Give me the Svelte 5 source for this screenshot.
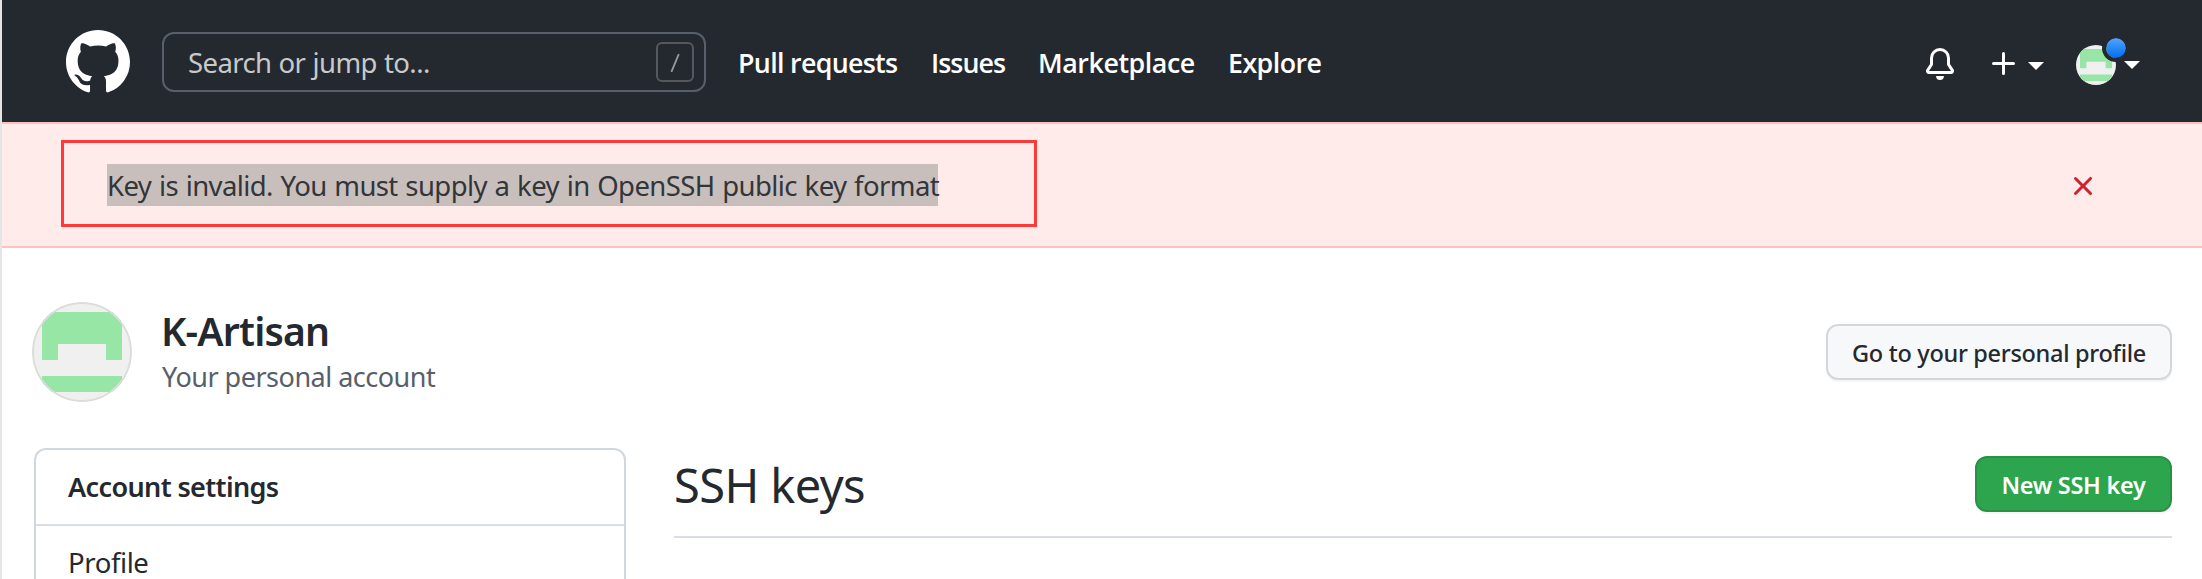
<script>
  const nav = [
    { label: 'Pull requests', cls: 'pulls' },
    { label: 'Issues', cls: 'issues' },
    { label: 'Marketplace', cls: 'market' },
    { label: 'Explore', cls: 'explore' }
  ];
</script>

{#snippet identicon()}
  <svg viewBox="0 0 100 100" aria-hidden="true">
    <rect width="100" height="100" fill="#f0f0f0" />
    <path fill="#98e6a5" d="M10 10h80v48H74V42H26v16H10zM10 74h80v16H10z" />
  </svg>
{/snippet}

<div class="page">
  <header>
    <svg class="logo" viewBox="0 0 16 16" aria-hidden="true">
      <path fill="#fff" fill-rule="evenodd" d="M8 0C3.58 0 0 3.58 0 8c0 3.54 2.29 6.53 5.47 7.59.4.07.55-.17.55-.38 0-.19-.01-.82-.01-1.49-2.01.37-2.53-.49-2.69-.94-.09-.23-.48-.94-.82-1.13-.28-.15-.68-.52-.01-.53.63-.01 1.08.58 1.23.82.72 1.21 1.87.87 2.33.66.07-.52.28-.87.51-1.07-1.78-.2-3.64-.89-3.64-3.95 0-.87.31-1.59.82-2.15-.08-.2-.36-1.02.08-2.12 0 0 .67-.21 2.2.82.64-.18 1.32-.27 2-.27.68 0 1.36.09 2 .27 1.53-1.04 2.2-.82 2.2-.82.44 1.1.16 1.92.08 2.12.51.56.82 1.27.82 2.15 0 3.07-1.87 3.75-3.65 3.95.29.25.54.73.54 1.48 0 1.07-.01 1.93-.01 2.2 0 .21.15.46.55.38A8.013 8.013 0 0016 8c0-4.42-3.58-8-8-8z" />
    </svg>
    <div class="search">
      <span class="hint">Search or jump to...</span>
      <span class="slash">
        <svg viewBox="0 0 38 40" aria-hidden="true">
          <path d="M22.8 12.2 15.4 29.8" fill="none" stroke="#979a9c" stroke-width="1.8" />
        </svg>
      </span>
    </div>
    <nav>
      {#each nav as item}
        <span class={item.cls}>{item.label}</span>
      {/each}
    </nav>
    <div class="tools">
      <svg class="bell" viewBox="0 0 16 16" aria-hidden="true">
        <path fill="#fff" fill-rule="evenodd" d="M8 16a2 2 0 001.985-1.75c.017-.137-.097-.25-.235-.25h-3.5c-.138 0-.252.113-.235.25A2 2 0 008 16zM3 5a5 5 0 0110 0v2.947c0 .05.015.098.042.139l1.703 2.555A1.518 1.518 0 0113.482 13H2.518a1.518 1.518 0 01-1.263-2.36l1.703-2.554A.25.25 0 003 7.947V5zm5-3.5A3.5 3.5 0 004.5 5v2.947c0 .346-.102.683-.294.97l-1.703 2.556a.018.018 0 00-.003.01l.001.006c0 .002.002.004.004.006a.017.017 0 00.006.004l.007.001h10.964l.007-.001a.016.016 0 00.006-.004.016.016 0 00.004-.006l.001-.007a.017.017 0 00-.003-.01l-1.703-2.554a1.75 1.75 0 01-.294-.97V5A3.5 3.5 0 008 1.5z" />
      </svg>
      <svg class="plus" viewBox="0 0 16 16" aria-hidden="true">
        <path fill="#fff" fill-rule="evenodd" d="M7.75 2a.75.75 0 01.75.75V7h4.25a.75.75 0 110 1.5H8.5v4.25a.75.75 0 11-1.5 0V8.5H2.75a.75.75 0 010-1.5H7V2.75A.75.75 0 017.75 2z" />
      </svg>
      <svg class="caret add" viewBox="0 0 16 8" aria-hidden="true"><path fill="#fff" d="M0 0h16L8 8z" /></svg>
      <div class="me">
        <div class="round">{@render identicon()}</div>
        <i class="dot"></i>
      </div>
      <svg class="caret user" viewBox="0 0 16 8" aria-hidden="true"><path fill="#fff" d="M0 0h16L8 8z" /></svg>
    </div>
  </header>

  <section class="flash">
    <div class="frame">
      <span class="message">Key is invalid. You must supply a key in OpenSSH public key format</span>
    </div>
    <svg class="close" viewBox="0 0 16 16" aria-hidden="true">
      <path fill="#cf222e" fill-rule="evenodd" d="M3.72 3.72a.75.75 0 011.06 0L8 6.94l3.22-3.22a.75.75 0 111.06 1.06L9.06 8l3.22 3.22a.75.75 0 11-1.06 1.06L8 9.06l-3.22 3.22a.75.75 0 01-1.06-1.06L6.94 8 3.72 4.78a.75.75 0 010-1.06z" />
    </svg>
  </section>

  <section class="account">
    <div class="avatar">{@render identicon()}</div>
    <div class="names">
      <h2>K-Artisan</h2>
      <p>Your personal account</p>
    </div>
    <button class="btn profile-btn">Go to your personal profile</button>
  </section>

  <div class="columns">
    <aside>
      <div class="row title">Account settings</div>
      <div class="row">Profile</div>
    </aside>
    <main>
      <div class="subhead">
        <h1>SSH keys</h1>
        <button class="btn primary">New SSH key</button>
      </div>
    </main>
  </div>
</div>

<style>
  :global(body) {
    margin: 0;
    background: #fff;
    overflow: hidden;
  }
  .page {
    box-sizing: border-box;
    width: 2202px;
    height: 579px;
    overflow: hidden;
    border-left: 2px solid #e5e5e5;
    font-family: "Noto Sans", "Open Sans", sans-serif;
    font-size: 27.5px;
    color: #24292f;
  }
  svg {
    display: block;
    flex: none;
  }
  h1, h2, p {
    margin: 0;
    font-weight: 400;
  }
  header {
    box-sizing: border-box;
    height: 122px;
    padding: 30px 62px 28px 64px;
    display: flex;
    align-items: center;
    background: #24292f;
  }
  .logo {
    width: 64px;
    height: 64px;
  }
  .search {
    box-sizing: border-box;
    width: 544px;
    height: 60px;
    margin-left: 32px;
    padding: 0 10px 0 24px;
    border: 2px solid #57606a;
    border-radius: 12px;
    display: flex;
    align-items: center;
    justify-content: space-between;
    color: #c8c9cb;
  }
  .hint {
    padding-top: 2px;
    letter-spacing: -0.6px;
    word-spacing: 0.6px;
    line-height: 42px;
  }
  .slash {
    box-sizing: border-box;
    width: 38px;
    height: 40px;
    border: 2px solid #55595d;
    border-radius: 6px;
  }
  .slash svg {
    width: 38px;
    height: 40px;
    margin: -2px;
  }
  nav {
    display: flex;
    margin-left: 32px;
    padding-top: 2px;
    font-family: "Open Sans", sans-serif;
    font-size: 26.8px;
    font-weight: 640;
    line-height: 42px;
    color: #fff;
  }
  nav span {
    box-sizing: border-box;
    white-space: nowrap;
  }
  .pulls { width: 193px; letter-spacing: -0.68px; }
  .issues { width: 107px; letter-spacing: -0.96px; }
  .market { width: 190px; letter-spacing: -0.44px; }
  .explore { width: 100px; letter-spacing: -0.55px; }
  .tools {
    display: flex;
    align-items: center;
    margin-left: auto;
    padding-top: 6px;
  }
  .bell, .plus {
    width: 32px;
    height: 32px;
    margin-bottom: 2px;
  }
  .plus {
    margin-left: 32px;
  }
  .caret {
    width: 16px;
    height: 8px;
  }
  .add {
    margin-left: 8px;
    margin-bottom: -2px;
  }
  .me {
    position: relative;
    width: 40px;
    height: 40px;
    margin-left: 32px;
  }
  .round {
    width: 40px;
    height: 40px;
    border-radius: 50%;
    overflow: hidden;
  }
  .dot {
    position: absolute;
    top: -11px;
    right: -14px;
    width: 20px;
    height: 20px;
    border: 4px solid #24292f;
    border-radius: 50%;
    background: linear-gradient(#54a3ff, #006eed) padding-box;
  }
  .user {
    position: relative;
    margin-left: 8px;
  }
  .flash {
    box-sizing: border-box;
    height: 126px;
    padding: 16px 103px 19px 59px;
    display: flex;
    align-items: center;
    justify-content: space-between;
    background: #ffebe9;
    border-top: 2px solid #ffc0bf;
    border-bottom: 2px solid #ffc0bf;
  }
  .frame {
    box-sizing: border-box;
    width: 976px;
    height: 87px;
    padding: 21px 43px;
    border: 3px solid #ff3838;
  }
  .message {
    display: block;
    width: 831px;
    height: 42px;
    line-height: 43px;
    white-space: nowrap;
    letter-spacing: -0.59px;
    word-spacing: 1.1px;
    color: #32353a;
    background: #c8bfbd;
  }
  .close {
    width: 32px;
    height: 32px;
    margin-top: 4px;
  }
  .account {
    display: flex;
    align-items: center;
    height: 100px;
    padding: 54px 30px 46px;
  }
  .avatar {
    box-sizing: border-box;
    width: 100px;
    height: 100px;
    border-radius: 50%;
    overflow: hidden;
    position: relative;
  }
  .avatar::after {
    content: "";
    position: absolute;
    inset: 0;
    border: 2px solid #dcdcdc;
    border-radius: 50%;
  }
  .names {
    margin-left: 30px;
  }
  h2 {
    font-size: 39.2px;
    font-weight: 600;
    line-height: 50px;
    letter-spacing: -0.8px;
    margin-left: -1px;
  }
  p {
    font-size: 27px;
    line-height: 42px;
    letter-spacing: -0.5px;
    color: #57606a;
  }
  .btn {
    box-sizing: border-box;
    height: 56px;
    padding: 2px 0 0;
    border: 2px solid #d3d7db;
    border-radius: 12px;
    background: #f6f8fa;
    box-shadow: 0 2px 0 rgba(27, 31, 36, 0.04);
    font: 500 23.5px/50px "Noto Sans", sans-serif;
    color: #24292f;
    text-align: center;
    white-space: nowrap;
  }
  .profile-btn {
    width: 346px;
    margin-left: auto;
    letter-spacing: -0.3px;
  }
  .columns {
    display: flex;
    gap: 48px;
    padding: 0 30px 0 32px;
  }
  aside {
    box-sizing: border-box;
    flex: none;
    width: 592px;
    height: 160px;
    border: 2px solid #d0d7de;
    border-radius: 12px;
  }
  .row {
    height: 74px;
    padding-left: 32px;
    line-height: 74px;
    letter-spacing: -0.4px;
  }
  .title {
    border-bottom: 2px solid #d8dee4;
    font-size: 27px;
    font-weight: 600;
    letter-spacing: -0.62px;
  }
  main {
    flex: 1;
  }
  .subhead {
    box-sizing: border-box;
    height: 90px;
    padding: 0 0 16px;
    display: flex;
    align-items: center;
    justify-content: space-between;
    border-bottom: 2px solid #d8dee4;
  }
  h1 {
    padding-top: 3px;
    font-size: 47px;
    line-height: 69px;
    letter-spacing: -0.6px;
  }
  .primary {
    width: 197px;
    border-color: #2a9147;
    background: #2da44e;
    color: #fff;
    font-weight: 600;
    letter-spacing: -0.3px;
  }
</style>
